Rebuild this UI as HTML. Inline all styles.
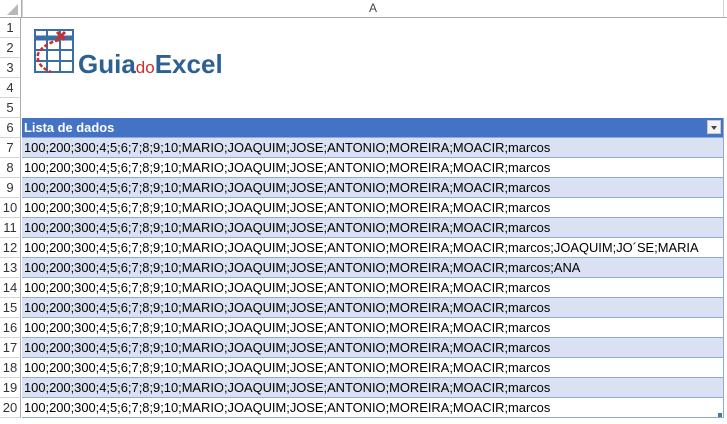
<html><head><style>
body{margin:0;width:727px;height:424px;overflow:hidden;background:#fff;font-family:"Liberation Sans",Arial,sans-serif;position:relative}
.hdr{position:absolute;left:0;top:0;width:727px;height:18px;background:#fff;border-bottom:1px solid #ababab;box-sizing:border-box}
.hdr .a{position:absolute;left:22px;right:3px;top:0;height:17px;text-align:center;font-size:12px;line-height:17px;color:#444;border-left:1px solid #d4d4d4;border-right:1px solid #d4d4d4}
.corner{position:absolute;left:0;top:0;width:21px;height:17px;border-right:1px solid #ababab}
.rn{position:absolute;left:0;width:21px;height:20px;box-sizing:border-box;border-right:1px solid #ababab;border-bottom:1px solid #d4d4d4;font-size:13px;line-height:20px;text-align:center;color:#333;background:#fff}
.row{position:absolute;left:22px;width:701px;height:20px;box-sizing:border-box;border-bottom:1px solid #8ea9db;font-size:12.9px;line-height:19px;padding-left:2px;color:#000;white-space:nowrap;overflow:hidden}
.b{background:#d9e1f2}
.th{background:#4472c4;color:#fff;font-weight:bold;border-bottom:1px solid #8ea9db}
.dd{position:absolute;right:2px;top:2px;width:14px;height:14px;background:#f4f4f4;border:1px solid #c8c8c8;box-sizing:border-box}
.dd:after{content:"";position:absolute;left:3px;top:5px;border-left:3px solid transparent;border-right:3px solid transparent;border-top:4px solid #444}
</style></head><body>
<div class="hdr"><div class="corner"><svg width="21" height="17"><polygon points="18,4 18,15 7,15" fill="#b8b8b8"/></svg></div><div class="a">A</div></div>
<div style="position:absolute;left:723px;top:118px;width:1px;height:300px;background:#8ea9db"></div>
<svg style="position:absolute;left:33px;top:28px" width="195" height="50">
<g stroke="#3a6ea5" stroke-width="2" fill="none">
<rect x="2" y="2" width="38" height="42" />
<line x1="2" y1="10" x2="40" y2="10" stroke-width="5"/>
<line x1="2" y1="22" x2="40" y2="22"/><line x1="2" y1="33" x2="40" y2="33"/>
<line x1="14" y1="2" x2="14" y2="44"/><line x1="27" y1="2" x2="27" y2="44"/>
</g>
<path d="M26 12 Q10 16 5 26 Q3 38 18 44" stroke="#c9302c" stroke-width="2.5" fill="none" stroke-dasharray="4,2"/>
<path d="M24 4 L32 12 M32 4 L24 12" stroke="#c9302c" stroke-width="3"/>
<text x="45" y="45" font-family="Liberation Sans,sans-serif" font-weight="bold" font-size="26" fill="#2e6193">Guia<tspan fill="#c9302c" font-size="17" font-weight="normal">do</tspan>Excel</text>
</svg>
<div id="c"></div>
<script>
var h='',t='100;200;300;4;5;6;7;8;9;10;MARIO;JOAQUIM;JOSE;ANTONIO;MOREIRA;MOACIR;marcos';
for(var i=1;i<=20;i++){var y=18+(i-1)*20;h+='<div class="rn" style="top:'+y+'px">'+i+'</div>';
if(i==6)h+='<div class="row th" style="top:'+y+'px">Lista de dados<div class="dd"></div></div>';
else if(i>6){var s=t;if(i==12)s+=';JOAQUIM;JO´SE;MARIA';if(i==13)s+=';ANA';h+='<div class="row'+(i%2?' b':'')+'" style="top:'+y+'px">'+s+'</div>';}}
h+='<div style="position:absolute;left:718px;top:413px;width:4px;height:4px;background:#4472c4"></div>';
document.getElementById('c').innerHTML=h;
</script>
</body></html>
